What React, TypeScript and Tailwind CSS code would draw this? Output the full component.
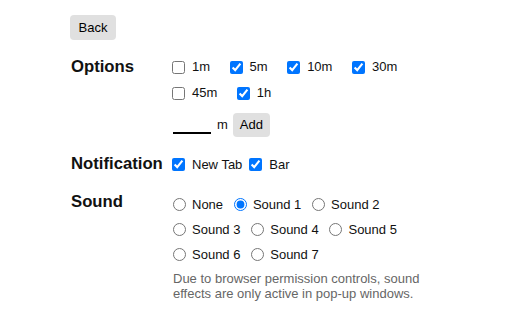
import React from "react";

const font = { fontFamily: '"Liberation Sans", Arial, sans-serif' };

function Check({ label, checked }: { label: string; checked?: boolean }) {
  return (
    <label className="flex h-full items-center">
      <input type="checkbox" defaultChecked={checked} className="m-0 h-[13px] w-[13px]" />
      <span className="ml-[7px]">{label}</span>
    </label>
  );
}

function Radio({ label, checked }: { label: string; checked?: boolean }) {
  return (
    <label className="flex h-[25px] items-center">
      <input type="radio" name="sound" defaultChecked={checked} className="m-0 h-[13px] w-[13px]" />
      <span className="ml-[6px]">{label}</span>
    </label>
  );
}

export default function App() {
  return (
    <div className="min-h-[320px] bg-white pl-[70px] pt-[15px] text-[13px] text-[#111]" style={font}>
      <button className="flex h-[25px] w-[46px] items-center justify-center rounded-[4px] bg-[#e0e0e0] text-[13px] text-black">
        Back
      </button>

      <div className="mt-[14px] flex">
        <div className="w-[102px] pl-[1px] text-[16.7px] font-bold leading-[26px]">Options</div>
        <div className="w-[268px]">
          <div className="flex flex-wrap gap-x-[19.5px]">
            <div className="h-[26px]"><Check label="1m" /></div>
            <div className="h-[26px]"><Check label="5m" checked /></div>
            <div className="h-[26px]"><Check label="10m" checked /></div>
            <div className="h-[26px]"><Check label="30m" checked /></div>
            <div className="h-[26px]"><Check label="45m" /></div>
            <div className="h-[26px]"><Check label="1h" checked /></div>
          </div>
          <div className="mt-[7px] flex items-start">
            <input
              type="text"
              className="ml-[1px] h-[21px] w-[38px] border-0 border-b-2 border-black bg-transparent p-0 outline-none"
            />
            <span className="ml-[6px] h-[23px] leading-[23px]">m</span>
            <button className="ml-[5px] flex h-[24px] w-[37px] items-center justify-center rounded-[4px] bg-[#e0e0e0] text-[13px] text-black">
              Add
            </button>
          </div>
        </div>
      </div>

      <div className="mt-[14px] flex h-[27px]">
        <div className="w-[102px] pl-[1px] text-[16.7px] font-bold leading-[25px]">Notification</div>
        <div className="flex gap-x-[7px]">
          <Check label="New Tab" checked />
          <Check label="Bar" checked />
        </div>
      </div>

      <div className="mt-[14px] flex">
        <div className="w-[102px] pl-[1px] text-[16.7px] font-bold leading-[19px]">Sound</div>
        <div className="w-[268px] pl-[1px]">
          <div className="flex flex-wrap gap-x-[10.8px]">
            <Radio label="None" />
            <Radio label="Sound 1" checked />
            <Radio label="Sound 2" />
            <Radio label="Sound 3" />
            <Radio label="Sound 4" />
            <Radio label="Sound 5" />
            <Radio label="Sound 6" />
            <Radio label="Sound 7" />
          </div>
          <p className="mt-[4px] leading-[15px] text-[#666]">
            Due to browser permission controls, sound effects are only active in pop-up windows.
          </p>
        </div>
      </div>
    </div>
  );
}
